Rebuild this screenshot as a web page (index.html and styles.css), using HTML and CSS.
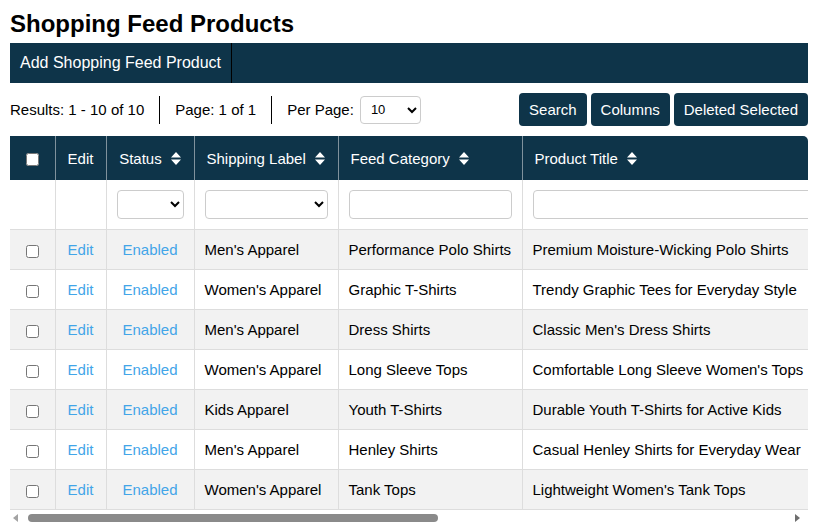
FILE: index.html
```html
<!DOCTYPE html>
<html lang="en">
<head>
    <meta charset="UTF-8">
    <meta name="viewport" content="width=device-width, initial-scale=1.0">
    <title>Shopping Feed Products</title>
    <link rel="stylesheet" href="styles.css">
</head>
<body>

    <h1>Shopping Feed Products</h1>

    <div class="topnav">
        <a href="#">Add Shopping Feed Product</a>
    </div>

    <div class="toolbar">
        <span class="info first">Results: 1 - 10 of 10</span>
        <span class="info">Page: 1 of 1</span>
        <span class="info">Per Page:
            <select class="per-page">
                <option>10</option>
                <option>25</option>
                <option>50</option>
            </select>
        </span>
        <div class="actions">
            <button>Search</button>
            <button>Columns</button>
            <button>Deleted Selected</button>
        </div>
    </div>

    <div class="table-wrap">
        <table class="feed-table">
            <colgroup>
                <col style="width: 45px">
                <col style="width: 51px">
                <col style="width: 88px">
                <col style="width: 144px">
                <col style="width: 184px">
                <col style="width: 300px">
                <col style="width: 160px">
                <col style="width: 110px">
                <col style="width: 150px">
                <col style="width: 140px">
                <col style="width: 142px">
            </colgroup>
            <thead>
                <tr class="head-row">
                    <th class="center"><input type="checkbox"></th>
                    <th class="center">Edit</th>
                    <th class="center">Status <svg class="sort" viewBox="0 0 10 13"><path d="M5 0 L10 5.5 H0 Z M0 7.5 H10 L5 13 Z"/></svg></th>
                    <th>Shipping Label <svg class="sort" viewBox="0 0 10 13"><path d="M5 0 L10 5.5 H0 Z M0 7.5 H10 L5 13 Z"/></svg></th>
                    <th>Feed Category <svg class="sort" viewBox="0 0 10 13"><path d="M5 0 L10 5.5 H0 Z M0 7.5 H10 L5 13 Z"/></svg></th>
                    <th>Product Title <svg class="sort" viewBox="0 0 10 13"><path d="M5 0 L10 5.5 H0 Z M0 7.5 H10 L5 13 Z"/></svg></th>
                    <th>Brand <svg class="sort" viewBox="0 0 10 13"><path d="M5 0 L10 5.5 H0 Z M0 7.5 H10 L5 13 Z"/></svg></th>
                    <th>Price <svg class="sort" viewBox="0 0 10 13"><path d="M5 0 L10 5.5 H0 Z M0 7.5 H10 L5 13 Z"/></svg></th>
                    <th>SKU <svg class="sort" viewBox="0 0 10 13"><path d="M5 0 L10 5.5 H0 Z M0 7.5 H10 L5 13 Z"/></svg></th>
                    <th>Availability</th>
                    <th>Updated</th>
                </tr>
                <tr class="filter-row">
                    <td></td>
                    <td></td>
                    <td><select><option></option><option>Enabled</option><option>Disabled</option></select></td>
                    <td><select><option></option><option>Men's Apparel</option><option>Women's Apparel</option><option>Kids Apparel</option></select></td>
                    <td><input type="text"></td>
                    <td><input type="text"></td>
                    <td><input type="text"></td>
                    <td><input type="text"></td>
                    <td><input type="text"></td>
                    <td><input type="text"></td>
                    <td><input type="text"></td>
                </tr>
            </thead>
            <tbody>
                <tr>
                    <td class="center"><input type="checkbox"></td>
                    <td class="center"><a href="#">Edit</a></td>
                    <td class="center"><a href="#">Enabled</a></td>
                    <td>Men's Apparel</td>
                    <td>Performance Polo Shirts</td>
                    <td>Premium Moisture-Wicking Polo Shirts</td>
                    <td>Northline</td>
                    <td>$34.99</td>
                    <td>NL-PL-1001</td>
                    <td>In Stock</td>
                    <td>2024-03-02</td>
                </tr>
                <tr>
                    <td class="center"><input type="checkbox"></td>
                    <td class="center"><a href="#">Edit</a></td>
                    <td class="center"><a href="#">Enabled</a></td>
                    <td>Women's Apparel</td>
                    <td>Graphic T-Shirts</td>
                    <td>Trendy Graphic Tees for Everyday Style</td>
                    <td>Urban Loom</td>
                    <td>$19.99</td>
                    <td>UL-GT-2040</td>
                    <td>In Stock</td>
                    <td>2024-03-04</td>
                </tr>
                <tr>
                    <td class="center"><input type="checkbox"></td>
                    <td class="center"><a href="#">Edit</a></td>
                    <td class="center"><a href="#">Enabled</a></td>
                    <td>Men's Apparel</td>
                    <td>Dress Shirts</td>
                    <td>Classic Men's Dress Shirts</td>
                    <td>Carrington</td>
                    <td>$44.50</td>
                    <td>CR-DS-3310</td>
                    <td>In Stock</td>
                    <td>2024-03-05</td>
                </tr>
                <tr>
                    <td class="center"><input type="checkbox"></td>
                    <td class="center"><a href="#">Edit</a></td>
                    <td class="center"><a href="#">Enabled</a></td>
                    <td>Women's Apparel</td>
                    <td>Long Sleeve Tops</td>
                    <td>Comfortable Long Sleeve Women's Tops</td>
                    <td>Soft Harbor</td>
                    <td>$27.00</td>
                    <td>SH-LS-0412</td>
                    <td>Low Stock</td>
                    <td>2024-03-07</td>
                </tr>
                <tr>
                    <td class="center"><input type="checkbox"></td>
                    <td class="center"><a href="#">Edit</a></td>
                    <td class="center"><a href="#">Enabled</a></td>
                    <td>Kids Apparel</td>
                    <td>Youth T-Shirts</td>
                    <td>Durable Youth T-Shirts for Active Kids</td>
                    <td>Little Trail</td>
                    <td>$14.99</td>
                    <td>LT-YT-5120</td>
                    <td>In Stock</td>
                    <td>2024-03-08</td>
                </tr>
                <tr>
                    <td class="center"><input type="checkbox"></td>
                    <td class="center"><a href="#">Edit</a></td>
                    <td class="center"><a href="#">Enabled</a></td>
                    <td>Men's Apparel</td>
                    <td>Henley Shirts</td>
                    <td>Casual Henley Shirts for Everyday Wear</td>
                    <td>Northline</td>
                    <td>$29.99</td>
                    <td>NL-HS-1088</td>
                    <td>In Stock</td>
                    <td>2024-03-10</td>
                </tr>
                <tr>
                    <td class="center"><input type="checkbox"></td>
                    <td class="center"><a href="#">Edit</a></td>
                    <td class="center"><a href="#">Enabled</a></td>
                    <td>Women's Apparel</td>
                    <td>Tank Tops</td>
                    <td>Lightweight Women's Tank Tops</td>
                    <td>Soft Harbor</td>
                    <td>$16.50</td>
                    <td>SH-TT-0430</td>
                    <td>In Stock</td>
                    <td>2024-03-11</td>
                </tr>
            </tbody>
        </table>
    </div>

    <div class="hscroll">
        <svg class="arrow" viewBox="0 0 5 8"><path d="M5 0V8L0 4Z" fill="#a3a3a3"/></svg>
        <div class="thumb"></div>
        <svg class="arrow end" viewBox="0 0 5 8"><path d="M0 0V8L5 4Z" fill="#6e6e6e"/></svg>
    </div>

</body>
</html>
```

FILE: styles.css
```css
body {
    font-family: 'Liberation Sans', Arial, sans-serif;
    margin: 0;
    padding: 10px 10px 0;
    color: #000;
    background-color: white;
    overflow: hidden;
}
h1 {
    font-size: 24px;
    line-height: 28px;
    margin: 0 0 5px;
}
.topnav {
    display: flex;
    height: 40px;
    background-color: #0e3449;
}
.topnav a {
    color: white;
    font-size: 16px;
    line-height: 40px;
    padding: 0 10px;
    text-decoration: none;
    border-right: 1px solid #000;
}
.toolbar {
    display: flex;
    align-items: center;
    height: 33px;
    margin: 10px 0;
    font-size: 15px;
}
.info {
    display: flex;
    align-items: center;
    height: 28px;
    padding: 0 15px;
    border-left: 1px solid #000;
}
.info.first {
    padding-left: 0;
    border-left: none;
}
.per-page {
    width: 61px;
    height: 28px;
    margin-left: 6px;
    padding: 0 4px 0 6px;
    font-family: 'Liberation Sans', Arial, sans-serif;
    font-size: 13px;
    border: 1px solid #ccc;
    border-radius: 4px;
    background: white;
}
.actions {
    display: flex;
    gap: 4px;
    margin-left: auto;
}
.actions button {
    height: 33px;
    padding: 0 10px;
    font-family: 'Liberation Sans', Arial, sans-serif;
    font-size: 15px;
    color: white;
    background-color: #0e3449;
    border: none;
    border-radius: 4px;
    cursor: pointer;
}
.table-wrap {
    height: 374px;
    overflow: hidden;
    border-top-right-radius: 5px;
}
.feed-table {
    width: 1514px;
    table-layout: fixed;
    border-collapse: collapse;
    font-size: 15px;
}
.feed-table th {
    height: 44px;
    padding: 0 12px;
    text-align: left;
    font-weight: normal;
    color: white;
    white-space: nowrap;
    background-color: #0e3449;
    border-left: 1px solid #7f929d;
}
.feed-table th:first-child {
    border-left: none;
}
.feed-table th.center,
.feed-table td.center {
    text-align: center;
    padding-left: 0;
    padding-right: 0;
}
.sort {
    width: 10px;
    height: 13px;
    margin-left: 5px;
    vertical-align: -1px;
    fill: white;
}
.feed-table td {
    height: 39px;
    padding: 0 10px;
    white-space: nowrap;
    overflow: hidden;
    border: 1px solid #ddd;
    border-top: none;
}
.feed-table td:first-child {
    border-left: none;
}
.filter-row td {
    height: 49px;
    background-color: white;
}
.filter-row select,
.filter-row input {
    display: block;
    width: 100%;
    height: 29px;
    box-sizing: border-box;
    border: 1px solid #ccc;
    border-radius: 4px;
    background: white;
}
.feed-table tbody tr:nth-child(odd) td {
    background-color: #f2f2f2;
}
.feed-table input[type="checkbox"] {
    margin: 0;
    vertical-align: middle;
}
.feed-table a {
    color: #42a5e8;
    text-decoration: none;
}
.hscroll {
    display: flex;
    align-items: center;
    height: 15px;
    padding: 0 8px 0 3px;
}
.arrow {
    width: 5px;
    height: 8px;
}
.arrow.end {
    margin-left: auto;
}
.thumb {
    width: 410px;
    height: 8px;
    margin-left: 10px;
    border-radius: 4px;
    background-color: #8a8a8a;
}
```
